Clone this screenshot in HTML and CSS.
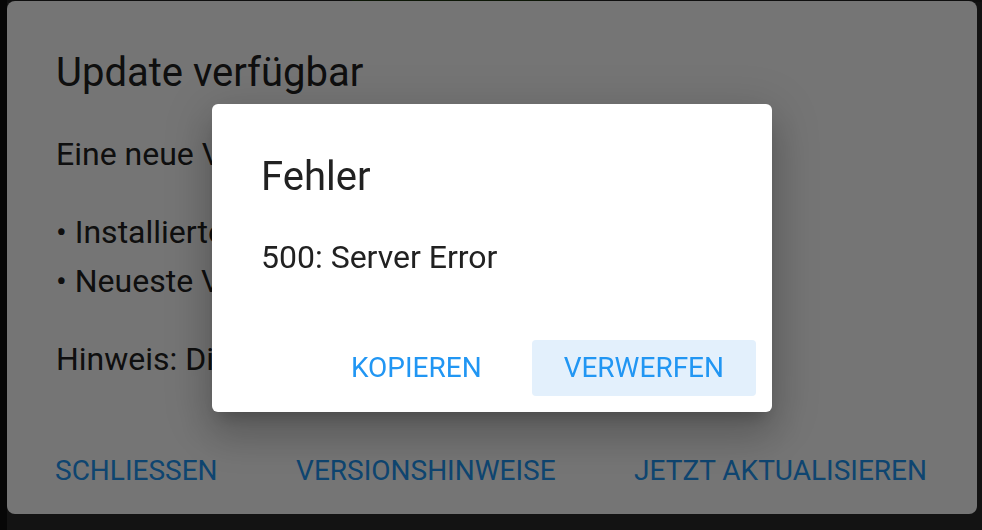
FILE: index.html
```html
<!DOCTYPE html>
<html lang="de">
<head>
  <meta charset="UTF-8">
  <meta name="viewport" content="width=device-width, initial-scale=1.0">
  <title>Update verfügbar</title>
<link rel="stylesheet" href="styles.css">
</head>
<body>
  <div class="app">
    <div class="rail"></div>
    <div class="app-main">
      <div class="topbar"><span class="topbar-mark"></span></div>
    </div>
  </div>

  <div class="dialog dialog-update">
    <h2 class="dialog-title">Update verfügbar</h2>
    <div class="dialog-body">
      <p>Eine neue Version ist verfügbar.</p>
      <p>• Installierte Version: 1.4.2<br>• Neueste Version: 1.5.0</p>
      <p>Hinweis: Die App wird neu gestartet.</p>
    </div>
    <div class="dialog-actions spread">
      <button class="btn-text">Schließen</button>
      <button class="btn-text">Versionshinweise</button>
      <button class="btn-text">Jetzt aktualisieren</button>
    </div>
  </div>

  <div class="barrier"></div>

  <div class="dialog dialog-error">
    <h2 class="dialog-title">Fehler</h2>
    <div class="dialog-body">
      <p>500: Server Error</p>
    </div>
    <div class="dialog-actions">
      <button class="btn-text">Kopieren</button>
      <button class="btn-text focused">Verwerfen</button>
    </div>
  </div>
</body>
</html>
```

FILE: styles.css
```css
body {
  margin: 0;
  width: 982px;
  height: 530px;
  overflow: hidden;
  font-family: Roboto, 'Noto Sans', sans-serif;
  background-color: #2a2a2a;
}

.app {
  display: flex;
  height: 100%;
}

.app .rail {
  width: 7px;
  background-color: #111;
}

.app-main {
  flex: 1;
  background-color: #2a2a2a;
}

.topbar {
  height: 2px;
  background-color: #222;
}

.topbar-mark {
  display: block;
  margin-left: 345px;
  width: 208px;
  height: 2px;
  background-color: #1d3210;
}

.dialog {
  position: absolute;
  background-color: white;
  border-radius: 8px;
  color: #212121;
}

.dialog-title {
  margin: 0;
  font-size: 40px;
  font-weight: normal;
  line-height: 46px;
}

.dialog-body p {
  margin: 0;
  font-size: 32px;
  line-height: 40px;
}

.dialog-actions {
  display: flex;
  justify-content: flex-end;
  gap: 18px;
}

.btn-text {
  background: none;
  border: none;
  border-radius: 4px;
  padding: 0 32px;
  height: 56px;
  font-family: inherit;
  font-size: 28px;
  line-height: 56px;
  white-space: nowrap;
  text-transform: uppercase;
  color: #2196f3;
  cursor: pointer;
}

.btn-text.focused {
  background-color: #e3f0fc;
}

/* Dialog darunter */
.dialog-update {
  left: 7px;
  top: 1px;
  width: 970px;
  height: 513px;
  padding-top: 49px;
  box-sizing: border-box;
  display: flex;
  flex-direction: column;
}

.dialog-update .dialog-title {
  padding-left: 49px;
}

.dialog-update .dialog-body {
  padding-left: 49px;
  margin-top: 34px;
}

.dialog-update .dialog-body p {
  line-height: 49px;
  margin-bottom: 29px;
}

.dialog-update .dialog-actions.spread {
  margin-top: auto;
  margin-bottom: 15px;
  padding: 0 18px 0 16px;
  gap: 0;
  justify-content: space-between;
}

.barrier {
  position: fixed;
  inset: 0;
  background-color: rgba(0, 0, 0, 0.54);
}

/* Fehlerdialog */
.dialog-error {
  left: 212px;
  top: 104px;
  width: 560px;
  padding: 50px 16px 16px 49px;
  box-sizing: border-box;
  border-radius: 6px;
  box-shadow: 0 11px 15px -7px rgba(0,0,0,0.2), 0 24px 38px 3px rgba(0,0,0,0.14), 0 9px 46px 8px rgba(0,0,0,0.12);
}

.dialog-error .dialog-body {
  margin-top: 37px;
}

.dialog-error .dialog-actions {
  margin-top: 63px;
}
```
